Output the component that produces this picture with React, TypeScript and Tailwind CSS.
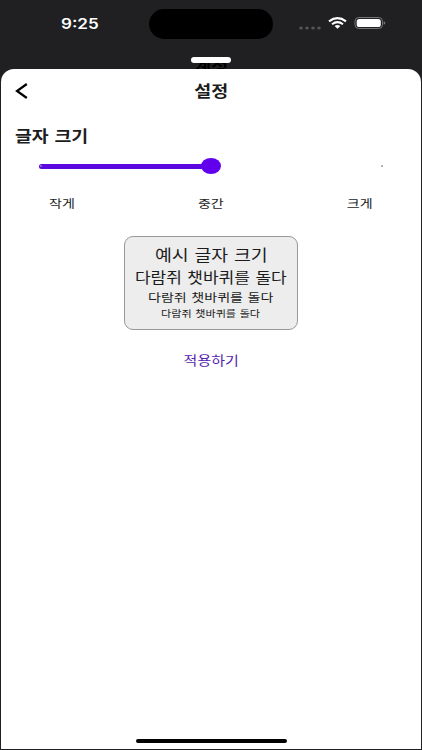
import type React from "react"
import clsx from "clsx"

const PREVIEW_LINES = [
  { text: "예시 글자 크기", className: "h-6 text-[15.4px] [word-spacing:1.4px]" },
  { text: "다람쥐 챗바퀴를 돌다", className: "h-[21px] text-[14.3px] [word-spacing:1.4px]" },
  { text: "다람쥐 챗바퀴를 돌다", className: "h-[18px] text-[11.8px] [word-spacing:1.2px]" },
  { text: "다람쥐 챗바퀴를 돌다", className: "h-[15px] text-[9.3px] [word-spacing:1px]" },
]

export default function App() {
  return (
    <div className="w-[422px] h-[750px] bg-[#202022] flex flex-col overflow-hidden font-['Inter','Noto_Sans_CJK_KR',sans-serif]">
      <StatusBar />
      <main className="relative mx-px h-[680px] bg-white rounded-t-[13px] flex flex-col text-[#1c1c1c]">
        <header className="grid grid-cols-[56px_1fr_56px] h-[43px] items-center">
          <button aria-label="뒤로" className="pl-[14px]">
            <svg width="13" height="16" viewBox="0 0 13 16" fill="none" stroke="#000" strokeWidth="2.2">
              <path d="M11.8 1L2 8L11.8 15" />
            </svg>
          </button>
          <h1 className="flex justify-center">
            <Label className="text-[15.5px] font-bold">설정</Label>
          </h1>
        </header>

        <section className="pt-[12px]">
          <h2 className="flex h-6 items-center pl-[14px]">
            <Label className="text-[15.4px] font-bold origin-left [word-spacing:1.3px]">글자 크기</Label>
          </h2>
          <SizeSlider />
          <div className="grid grid-cols-3 h-5 mt-[17px]">
            <span className="flex items-center pl-12">
              <Label className="text-[11.8px] origin-left">작게</Label>
            </span>
            <span className="flex items-center justify-center">
              <Label className="text-[11.8px]">중간</Label>
            </span>
            <span className="flex items-center justify-end pr-12">
              <Label className="text-[11.8px] origin-right">크게</Label>
            </span>
          </div>
        </section>

        <div className="mx-auto mt-[23px] flex h-[94px] w-[174px] flex-col items-center rounded-[9px] border border-[#999] bg-[#ededed] pt-[6px]">
          {PREVIEW_LINES.map((line, i) => (
            <div key={i} className={clsx("flex items-center", line.className)}>
              <Label>{line.text}</Label>
            </div>
          ))}
        </div>

        <button className="mx-auto mt-[18px] flex h-6 items-center text-[#5322ad]">
          <Label className="text-[12.6px]">적용하기</Label>
        </button>

        <div className="mx-auto mt-auto mb-[6px] h-1 w-[151px] rounded-full bg-black" />
      </main>
    </div>
  )
}

function StatusBar() {
  return (
    <div className="relative h-[69px] flex-shrink-0">
      <div className="grid grid-cols-[149px_124px_149px] pt-[9px]">
        <div className="flex items-center pl-[61px] text-white">
          <span className="inline-block origin-left scale-x-[1.17] text-[14.6px] font-semibold leading-none">9:25</span>
        </div>
        <div className="h-[30px] rounded-full bg-black" />
        <div className="flex items-center pl-[26px]">
          <svg width="22" height="4" viewBox="0 0 22 4" fill="#555557" className="mt-[7px]">
            <ellipse cx="2" cy="2" rx="1.8" ry="1.6" />
            <ellipse cx="8" cy="2" rx="1.8" ry="1.6" />
            <ellipse cx="14" cy="2" rx="1.8" ry="1.6" />
            <ellipse cx="20" cy="2" rx="1.8" ry="1.6" />
          </svg>
          <svg width="19" height="12" viewBox="0 0 19 12" fill="none" stroke="#fff" className="ml-[7px] -mt-[2px]">
            <path d="M1 4.3Q9.5 -2.1 18 4.3" strokeWidth="2.1" />
            <path d="M4 7.2Q9.5 3 15 7.2" strokeWidth="2" />
            <path d="M6.6 9.1Q9.5 7.1 12.4 9.1L9.5 11.7Z" fill="#fff" stroke="none" />
          </svg>
          <svg width="32" height="12" viewBox="0 0 32 12" fill="none" className="ml-[7px] -mt-[2px]">
            <rect x="1" y="0.5" width="27.5" height="11" rx="3.8" stroke="#77777a" />
            <rect x="2.7" y="2" width="24.1" height="8" rx="2.6" fill="#fff" />
            <path d="M29.7 4.2Q31.4 4.7 31.4 6T29.7 7.8Z" fill="#77777a" />
          </svg>
        </div>
      </div>
      {/* title of the screen underneath the sheet */}
      <div className="absolute inset-x-0 top-[58px] flex justify-center text-black">
        <Label className="text-[15.5px] font-bold">계정</Label>
      </div>
      <div className="absolute left-[191px] top-[57px] h-[5.5px] w-10 rounded-full bg-white" />
    </div>
  )
}

function SizeSlider() {
  return (
    <div className="mx-[38px] flex h-5 items-center mt-[8px]">
      <div className="-mr-1 flex h-[5px] w-[166px] items-center rounded-l-full bg-[#5b07df] pl-[1px]">
        <div className="size-[2px] rounded-full bg-[#9b78df]" />
      </div>
      <div className="h-4 w-5 rounded-[50%] bg-[#6200ee]" />
      <div className="ml-auto h-[2px] w-[2px] rounded-full bg-[#999]" />
    </div>
  )
}

function Label({ children, className }: { children: React.ReactNode; className?: string }) {
  return (
    <span className={clsx("inline-block scale-x-[1.19] whitespace-nowrap leading-none font-['Noto_Sans_CJK_KR',sans-serif]", className)}>
      {children}
    </span>
  )
}
